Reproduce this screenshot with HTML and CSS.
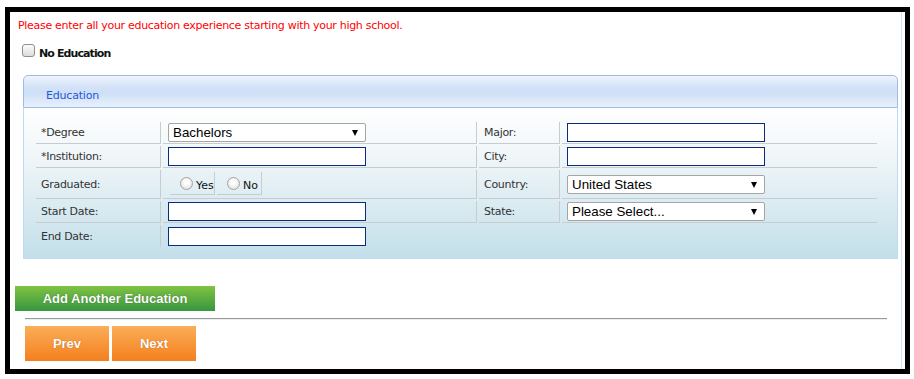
FILE: index.html
```html
<!DOCTYPE html>
<html lang="en">

<head>
    <meta charset="UTF-8">
    <meta name="viewport" content="width=device-width, initial-scale=1.0">
    <title>Education</title>
    <link rel="stylesheet" href="styles.css">
</head>

<body>
    <div class="frame">
        <p class="intro">Please enter all your education experience starting with your high school.</p>

        <label class="no-edu">
            <input type="checkbox" class="check">
            <span>No Education</span>
        </label>

        <div class="panel">
            <div class="panel-head">Education</div>
            <div class="panel-body">
                <div class="form-grid">
                    <div class="cell label">*Degree</div>
                    <div class="cell field">
                        <div class="select"><span>Bachelors</span></div>
                    </div>
                    <div class="cell label">Major:</div>
                    <div class="cell field last"><input type="text" class="text"></div>

                    <div class="cell label">*Institution:</div>
                    <div class="cell field"><input type="text" class="text"></div>
                    <div class="cell label">City:</div>
                    <div class="cell field last"><input type="text" class="text"></div>

                    <div class="cell label">Graduated:</div>
                    <div class="cell field radios">
                        <label class="radio-box"><input type="radio" name="grad" class="radio"><span>Yes</span></label>
                        <label class="radio-box"><input type="radio" name="grad" class="radio"><span>No</span></label>
                    </div>
                    <div class="cell label">Country:</div>
                    <div class="cell field last">
                        <div class="select"><span>United States</span></div>
                    </div>

                    <div class="cell label">Start Date:</div>
                    <div class="cell field"><input type="text" class="text"></div>
                    <div class="cell label">State:</div>
                    <div class="cell field last">
                        <div class="select"><span>Please Select...</span></div>
                    </div>

                    <div class="cell label end">End Date:</div>
                    <div class="cell field end plain"><input type="text" class="text"></div>
                </div>
            </div>
        </div>

        <button type="button" class="btn-green">Add Another Education</button>

        <hr class="divider">

        <div class="nav">
            <button type="button" class="btn-orange">Prev</button>
            <button type="button" class="btn-orange">Next</button>
        </div>
    </div>
</body>

</html>
```

FILE: styles.css
```css
body {
    margin: 0;
    background: #fff;
    font-family: "DejaVu Sans", Tahoma, sans-serif;
    font-size: 11px;
    color: #333;
}

.frame {
    margin: 7px 0 0 5px;
    width: 905px;
    height: 367px;
    border: 5px solid #000;
    box-sizing: border-box;
    box-shadow: inset -3px 0 0 #fff, inset -4px 0 0 #d4e6f7;
}

.intro {
    margin: 7px 0 0 8px;
    line-height: 14px;
    color: #f00;
    letter-spacing: -0.3px;
}

.no-edu {
    display: flex;
    align-items: center;
    margin: 11px 0 0 12px;
    height: 13px;
    font-weight: bold;
    color: #111;
    letter-spacing: -0.9px;
}

.no-edu span {
    margin: 5px 0 0 4px;
}

.check {
    appearance: none;
    margin: 0;
    width: 13px;
    height: 13px;
    border: 1px solid #8e8f8f;
    border-radius: 3px;
    background: linear-gradient(#fcfcfc, #dcdcdc);
    box-sizing: border-box;
}

.panel {
    margin: 18px 0 0 13px;
    width: 875px;
}

.panel-head {
    height: 33px;
    box-sizing: border-box;
    border: 1px solid #9dbde4;
    border-radius: 5px 5px 0 0;
    background: linear-gradient(#eef4fd 0%, #d4e3f8 35%, #cddff6 55%, #e9f1fc 100%);
    padding: 13px 0 0 22px;
    color: #2258d8;
    font-size: 11px;
    letter-spacing: -0.2px;
}

.panel-body {
    height: 151px;
    box-sizing: border-box;
    border: 1px solid #bcdaf3;
    border-top: 0;
    background: linear-gradient(#fff 0%, #eef5f8 35%, #c3dfea 100%);
    padding: 14px 0 0 12px;
}

.form-grid {
    display: grid;
    grid-template-columns: 125px 314px 81px 315px;
    grid-template-rows: 22px 22px 29px 22px 22px;
    gap: 2px;
}

.cell {
    display: flex;
    align-items: center;
    padding-left: 5px;
    border-bottom: 1px solid #c9cccf;
    border-right: 1px solid #c9cccf;
    box-sizing: border-box;
}

.cell.last {
    border-right: 0;
}

.cell.end {
    border-bottom: 0;
}

.cell.plain {
    border-right: 0;
}

.label {
    color: #333;
    letter-spacing: -0.3px;
}

.text {
    margin: 0;
    width: 198px;
    height: 19px;
    border: 1px solid #0b2a80;
    box-sizing: border-box;
    background: #fff;
}

.select {
    position: relative;
    width: 198px;
    height: 19px;
    border: 1px solid #a5a5a5;
    border-radius: 2px;
    box-sizing: border-box;
    background: #fff;
    font-family: "Liberation Sans", Arial, sans-serif;
    font-size: 13.33px;
    line-height: 17px;
    color: #000;
    padding-left: 4px;
}

.select::after {
    content: "";
    position: absolute;
    right: 7px;
    top: 6px;
    border-left: 3.5px solid transparent;
    border-right: 3.5px solid transparent;
    border-top: 6px solid #000;
}

.radios {
    align-items: flex-start;
    padding-left: 7px;
    gap: 2px;
}

.radio-box {
    display: flex;
    align-items: center;
    margin-top: 2px;
    width: 45px;
    height: 23px;
    box-sizing: border-box;
    border-right: 1px solid #c9cccf;
    border-bottom: 1px solid #c9cccf;
    padding-left: 10px;
    color: #111;
}

.radio-box span {
    margin: 5px 0 0 3px;
}

.radio {
    appearance: none;
    margin: 0;
    width: 13px;
    height: 13px;
    border: 1px solid #a3a3a3;
    border-radius: 50%;
    background: radial-gradient(circle at 50% 40%, #fff 20%, #d8d8d8 100%);
    box-sizing: border-box;
}

.btn-green {
    display: block;
    margin: 27px 0 0 5px;
    width: 200px;
    height: 25px;
    border: 0;
    background: linear-gradient(#80c342, #379640);
    color: #fff;
    font-family: "Liberation Sans", Arial, sans-serif;
    font-size: 13px;
    font-weight: bold;
    text-shadow: 0 0 1px #2a5a20;
    padding: 0;
}

.divider {
    margin: 7px 0 0 15px;
    width: 862px;
    height: 0;
    border: 0;
    border-top: 1px solid #999;
    border-bottom: 1px solid #eee;
}

.nav {
    display: flex;
    gap: 3px;
    margin: 6px 0 0 15px;
}

.btn-orange {
    width: 84px;
    height: 35px;
    border: 0;
    padding: 0;
    background: linear-gradient(#fbae58, #f47f1e);
    color: #fff;
    font-family: "Liberation Sans", Arial, sans-serif;
    font-size: 13px;
    font-weight: bold;
    text-shadow: 0 0 1px #b3561a;
}
```
